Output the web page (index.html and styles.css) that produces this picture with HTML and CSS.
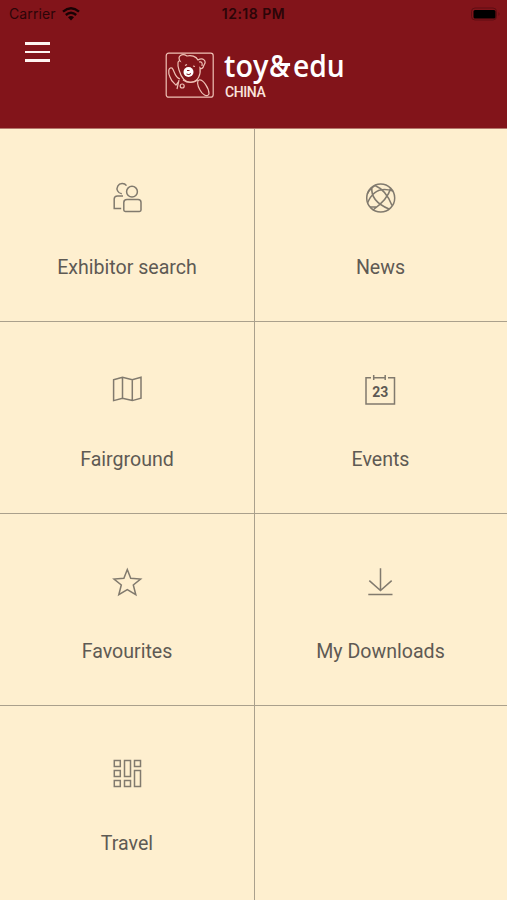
FILE: index.html
```
<!DOCTYPE html>
<html lang="en">
<head>
    <meta charset="UTF-8">
    <meta name="viewport" content="width=device-width, initial-scale=1.0">
    <title>toy &amp; edu China</title>
    <link rel="stylesheet" href="styles.css">
</head>
<body>
    <header class="header">
        <div class="status-bar">
            <div class="carrier">
                <span>Carrier</span>
                <svg class="wifi" width="18" height="14" viewBox="0 0 18 14">
                    <path d="M1 4.7Q9-2 17 4.7M3.8 8Q9 3.6 14.2 8"/>
                    <path class="solid" d="M6 10.2Q9 7.8 12 10.2L9 13.4z"/>
                </svg>
            </div>
            <span class="time">12:18 PM</span>
            <svg class="battery" width="32" height="14" viewBox="0 0 32 14">
                <rect class="case" x="2.5" y="1" width="25" height="12" rx="3.5"/>
                <rect x="4.5" y="3" width="22" height="8.5" rx="1.5"/>
                <path class="tip" d="M29.5 5q2 2 0 4z"/>
            </svg>
        </div>
        <div class="nav">
            <button class="menu-button" aria-label="Menu">
                <span></span>
                <span></span>
                <span></span>
            </button>
            <div class="brand">
                <svg class="bear" width="50" height="48" viewBox="0 0 50 48">
                    <rect x="1.2" y="1.2" width="47" height="44" rx="2.5"/>
                    <path d="M14 18C12 12 13 8 15 9C12 4 17 1 22 4C26 3 31 4 33 8C38 5 42 9 39 13C38 17 36 17 35 16C36 23 33 29 27 30C22 31 17 28 14 18z"/>
                    <path d="M34 10Q38 9 37 14"/>
                    <path d="M15 27C9 25 10 19 7 16C3 15 3 21 5 25C6 29 9 31 11 33L14 29M14 28L12 37M18 28Q25 33 33 28"/>
                    <circle cx="17.2" cy="34" r="2"/>
                    <path d="M34 28C38 27 44 36 44 42C42 46 37 42 35 38C32 33 32 29 34 28z"/>
                    <circle class="fill" cx="23.5" cy="20" r="5"/>
                    <path d="M20 13.5l2-1M28 14l2 .5"/>
                    <path class="nose" d="M22 18.5h2.5M21.5 22q2.5 1.5 4.5-.5"/>
                </svg>
                <div class="wordmark">
                    <div class="name">
                        <span class="toy">toy</span>
                        <span class="amp">&amp;</span>
                        <span class="edu">edu</span>
                    </div>
                    <div class="country">CHINA</div>
                </div>
            </div>
        </div>
    </header>

    <main class="grid">
        <a class="tile">
            <svg class="icon" viewBox="0 0 32 32">
                <circle cx="21" cy="9.7" r="5.4"/>
                <path d="M12.8 28V20.5Q12.8 17.5 16 17.5H27Q30 17.5 30 20.5V28Q30 29.4 28.5 29.4H14.3Q12.8 29.4 12.8 28z"/>
                <path d="M15.5 3.6A5.2 5.2 0 1 0 10.8 11.8M12 14H6.5Q3.2 14 3.2 17V26.4H10.2"/>
            </svg>
            <span>Exhibitor search</span>
        </a>
        <a class="tile">
            <svg class="icon" viewBox="0 0 32 32">
                <circle cx="15.7" cy="16" r="14"/>
                <path d="M10 3.5Q21 8 27 23.5M28 9Q10 3 2.5 21M7 5Q5 19 24 27M25.5 6.5Q23 17 8 28M10 3.5Q4 8 2.3 12M5 25Q9 25 12 25"/>
            </svg>
            <span>News</span>
        </a>
        <a class="tile">
            <svg class="icon" viewBox="0 0 32 32">
                <path d="M2.6 5.7L11.5 3.2L21.3 5.7L30 3.2V24.2L21.3 26.6L11.5 24.2L2.6 26.6zM11.5 3.2V24.2M21.3 5.7V26.6"/>
            </svg>
            <span>Fairground</span>
        </a>
        <a class="tile">
            <svg class="icon" viewBox="0 0 32 32">
                <path d="M6 3.7H1V30H29.5V3.7H23M8.7 3.7H20.2M8.7 1V6M20.2 1V6"/>
                <text x="15.2" y="22.6">23</text>
            </svg>
            <span>Events</span>
        </a>
        <a class="tile">
            <svg class="icon" viewBox="0 0 32 32">
                <path d="M16.3 3.6L19.7 12.3L29.6 13L22.3 19L24.8 28.7L16.3 23.7L7.8 28.7L10.3 19L3 13L12.9 12.3z"/>
            </svg>
            <span>Favourites</span>
        </a>
        <a class="tile">
            <svg class="icon" viewBox="0 0 32 32">
                <path d="M15.5 2.3V24.5M4.3 14.6L15.5 24.5L26.7 14.6M3.3 28.5H27.5"/>
            </svg>
            <span>My Downloads</span>
        </a>
        <a class="tile">
            <svg class="icon" viewBox="0 0 32 32">
                <path d="M3.3 2.5H9.3V8.5H3.3zM3.3 12.5H9.3V18.5H3.3zM3.3 22.5H9.3V28.5H3.3zM13.5 2.5H19.5V18.5H13.5zM13.5 22.5H19.5V28.5H13.5zM23.5 2.5H29.5V8.5H23.5zM23.5 12.5H29.5V28.5H23.5z"/>
            </svg>
            <span>Travel</span>
        </a>
        <div class="tile"></div>
    </main>
</body>
</html>
```
FILE: styles.css
```
* {
    box-sizing: border-box;
}
body {
    margin: 0;
    height: 900px;
    overflow: hidden;
    font-family: Roboto, "Liberation Sans", sans-serif;
    background-color: #feefcf;
    color: #5e5a54;
}
.header {
    height: 129px;
    background-color: #82141a;
    border-bottom: 1px solid #b4776c;
}
.status-bar {
    display: grid;
    grid-template-columns: 1fr auto 1fr;
    align-items: center;
    height: 27px;
    padding: 0 6px 0 9px;
    font-family: Inter, "Liberation Sans", sans-serif;
    font-size: 14px;
    color: #2b0508;
}
.carrier {
    display: flex;
    align-items: center;
    gap: 6px;
    letter-spacing: 0.1px;
}
.time {
    margin-right: 3px;
    font-size: 14px;
    font-weight: 600;
    letter-spacing: 0.5px;
}
.wifi {
    fill: none;
    stroke: #180204;
    stroke-width: 2.4;
}
.wifi .solid {
    fill: #180204;
    stroke: none;
}
.battery {
    justify-self: end;
    fill: #000;
}
.battery .case {
    fill: none;
    stroke: #5f0d12;
}
.battery .tip {
    fill: #5f0d12;
}
.nav {
    display: flex;
    padding-left: 25px;
}
.menu-button {
    display: flex;
    flex-direction: column;
    gap: 6px;
    width: 25px;
    height: 21px;
    margin-top: 15px;
    padding: 0;
    border: none;
    background: none;
}
.menu-button span {
    width: 25px;
    height: 2.5px;
    background-color: #fff4f0;
}
.brand {
    display: flex;
    gap: 9px;
    margin: 24px 0 0 115px;
}
.bear {
    margin-top: 1px;
    fill: none;
    stroke: #efc1b5;
    stroke-width: 1.2;
}
.bear .fill {
    fill: #fff;
    stroke: none;
}
.bear .nose {
    stroke: #82141a;
    stroke-width: 1;
}
.wordmark {
    color: #fff;
}
.name {
    display: flex;
    height: 33px;
    font-family: "Open Sans", sans-serif;
    font-size: 31px;
    font-weight: 600;
    line-height: 28px;
}
.toy {
    width: 45px;
    transform: scaleX(0.93);
    transform-origin: left;
}
.amp {
    position: relative;
    width: 24px;
    transform: scaleX(0.88);
    transform-origin: left;
}
/* crossbar of the logo's ampersand */
.amp::after {
    content: "";
    position: absolute;
    top: 12px;
    left: 12px;
    width: 12px;
    height: 3px;
    background-color: #fff;
}
.edu {
    transform: scaleX(0.91);
    transform-origin: left;
}
.country {
    padding-left: 1px;
    font-size: 14px;
    font-weight: 500;
    line-height: 16px;
    letter-spacing: -0.4px;
    color: #fbe4dc;
}
.grid {
    display: grid;
    grid-template-columns: 255px 252px;
    grid-template-rows: 193px 192px 192px 194px;
}
.tile {
    display: flex;
    flex-direction: column;
    align-items: center;
    padding-top: 52px;
    border-bottom: 1px solid #aaa08c;
    font-size: 19.6px;
    line-height: 24px;
}
.tile:nth-child(-n+2) {
    padding-top: 53px;
}
.tile:nth-last-child(-n+2) {
    border-bottom: none;
}
.tile:nth-child(odd) {
    border-right: 1px solid #aaa08c;
}
.tile span {
    margin-top: 42px;
}
.tile:nth-child(even) span {
    padding-right: 1px;
}
.icon {
    width: 32px;
    height: 32px;
    fill: none;
    stroke: #817a6e;
    stroke-width: 1.5;
}
.icon text {
    fill: #5e5a54;
    stroke: none;
    font-size: 14px;
    font-weight: 700;
    text-anchor: middle;
}
```
